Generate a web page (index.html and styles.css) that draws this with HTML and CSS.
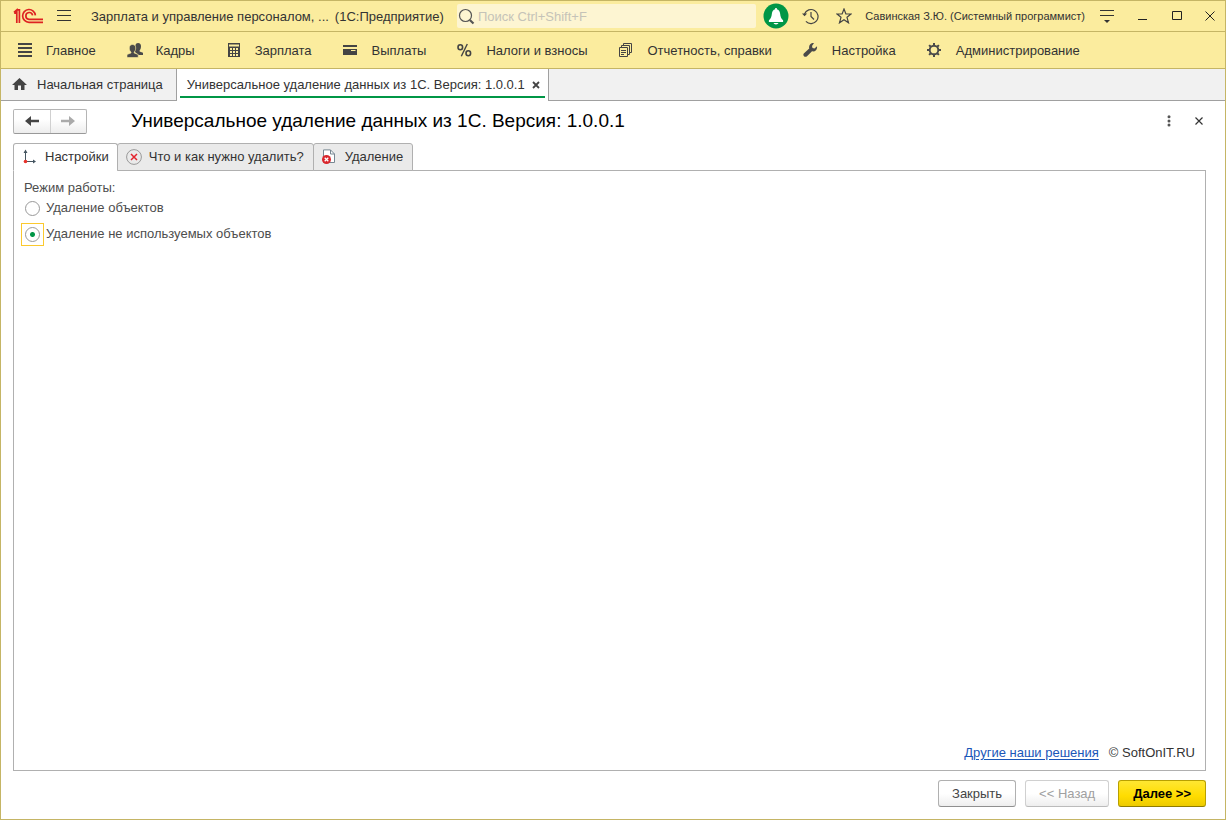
FILE: index.html
```html
<!DOCTYPE html>
<html lang="ru">
<head>
<meta charset="utf-8">
<title>Универсальное удаление данных из 1С</title>
<link rel="stylesheet" href="styles.css">
</head>
<body>
<div class="window">
  <header class="titlebar">
    <svg class="logo" width="30" height="16" viewBox="0 0 30 16" fill="none" stroke="#dd2222" stroke-width="1.700"><path d="M1 4.500 3.800 2V15M3.500 1.900H6.400V15M1.200 5.200H3.500"/><path d="M22.400 7.300A6.400 6.400 0 1 0 16 14.300H30"/><path d="M19.600 7.300A3.400 3.400 0 1 0 16 11.300H30"/></svg>
    <button class="icon-btn menu-btn" aria-label="Меню"><svg width="14" height="12" viewBox="0 0 14 12" stroke="#333"><path d="M0 .5H14M0 5.500H14M0 10.500H14"/></svg></button>
    <div class="app-title"><span>Зарплата и управление персоналом, ...</span><span>(1С:Предприятие)</span></div>
    <label class="search"><svg width="17" height="17" viewBox="0 0 17 17" fill="none" stroke="#555"><circle cx="7.500" cy="7.500" r="6" stroke-width="1.200"/><path d="M11.800 12 15.500 15.500" stroke-width="2.200"/></svg><input type="text" placeholder="Поиск Ctrl+Shift+F" aria-label="Поиск"></label>
    <button class="icon-btn bell" aria-label="Уведомления"><svg width="26" height="26" viewBox="0 0 26 26"><circle cx="13" cy="13" r="12.500" fill="#009646"/><path d="M12.200 5h1.600v1.300c2 .5 3 2 3.300 4.200.4 3.200 1 5 3 6.700V19H5.900v-1.800c2-1.700 2.600-3.500 3-6.700.3-2.200 1.300-3.700 3.300-4.200zM10.500 20h5c-.5 1.900-4.500 1.900-5 0z" fill="#fff"/></svg></button>
    <button class="icon-btn history" aria-label="История"><svg width="17" height="17" viewBox="0 0 17 17" fill="none" stroke="#444" stroke-width="1.200"><path d="M2.500 6A7 7 0 1 1 3.900 13.300M9 4V8.500L12 11.500"/><path d="M0 5.500H5.200L2.500 8.300z" fill="#444" stroke="none"/></svg></button>
    <button class="icon-btn star" aria-label="Избранное"><svg width="16" height="16" viewBox="0 0 16 16" fill="none" stroke="#444" stroke-width="1.200"><path d="M8 1 9.900 6H15L11 9.300 12.500 14.800 8 11.700 3.500 14.800 5 9.300 1 6H6.100z"/></svg></button>
    <span class="user">Савинская З.Ю. (Системный программист)</span>
    <button class="icon-btn options" aria-label="Параметры"><svg width="14" height="14" viewBox="0 0 14 14"><path d="M0 1.500H14M0 6.500H14" stroke="#333"/><path d="M4 11H10L7 14z" fill="#333"/></svg></button>
    <button class="icon-btn minimize" aria-label="Свернуть"><svg width="10" height="10" viewBox="0 0 10 10" stroke="#222"><path d="M0 8.500H9"/></svg></button>
    <button class="icon-btn maximize" aria-label="Развернуть"><svg width="10" height="10" viewBox="0 0 10 10" fill="none" stroke="#222"><path d="M.5.5H9.500V8.500H.5z"/></svg></button>
    <button class="icon-btn" aria-label="Закрыть окно"><svg width="10" height="10" viewBox="0 0 10 10" stroke="#222"><path d="M.5.5 9.500 9.500M9.500.5.5 9.500"/></svg></button>
  </header>

  <nav class="sections">
    <button class="section"><svg width="16" height="16" viewBox="0 0 16 16" stroke="#444" stroke-width="2"><path d="M1 1H15M1 5H15M1 9H15M1 13H15"/></svg>Главное</button>
    <button class="section"><svg width="16" height="16" viewBox="0 0 16 16" fill="#4a4a4a"><path d="M11 0c2.200 0 3 1.400 3 3.300S13.200 7 12.600 7.500v1L16 9.800V12h-4.500L8 9 8.500 2C8.800.7 9.700 0 11 0z"/><path d="M5.500 1.500c2.200 0 3.200 1.500 3.200 3.500S7.800 8.500 7.200 9v1l4 1.500v3H0v-3L4 10V9C3 8.400 2.300 6.800 2.300 5S3.300 1.500 5.500 1.500z" stroke="#fbec9e" stroke-width=".6"/></svg>Кадры</button>
    <button class="section"><svg width="16" height="16" viewBox="0 0 16 16"><path d="M2 0H14V14H2z" fill="#444"/><path d="M3 1.500H13V3.500H3zM4 5H6V7H4zM7 5H9V7H7zM10 5H12V7H10zM4 8H6V10H4zM7 8H9V10H7zM10 8H12V10H10zM4 11H6V13H4zM7 11H9V13H7zM10 11H12V13H10z" fill="#fbec9e"/></svg>Зарплата</button>
    <button class="section"><svg width="16" height="16" viewBox="0 0 16 16" fill="#444"><path d="M0 2H14V4H0zM0 6H14V12H0z"/><path d="M8 7.500H12.500" stroke="#fbec9e"/></svg>Выплаты</button>
    <button class="section"><svg width="16" height="16" viewBox="0 0 16 16" fill="none" stroke="#444" stroke-width="1.600"><ellipse cx="3.300" cy="4.200" rx="2.300" ry="2.500"/><ellipse cx="11.300" cy="10.200" rx="2.300" ry="2.500"/><path d="M10.300 1 4.300 13.300" stroke-width="1.400"/></svg>Налоги и взносы</button>
    <button class="section"><svg width="16" height="16" viewBox="0 0 16 16" fill="none" stroke="#444"><path d="M.5 4.500H8.500V13.500H.5zM2.500 4.500V2.500H10.500V11.500H8.500M4.500 2.500V.5H12.500V9.500H10.500M2 7.500H7M2 9.500H7M2 11.500H5"/></svg>Отчетность, справки</button>
    <button class="section"><svg width="16" height="16" viewBox="0 0 16 16" fill="#4a4a4a"><path d="M11 0 9 3 9.500 5 11.500 5.500 14 3.300C14.500 6.500 12.300 9 9 8.300L4 13.300C2 15-.8 12.500.8 10.500L6.200 5.400C5.400 2 8 -.5 11 0z"/></svg>Настройка</button>
    <button class="section"><svg width="16" height="16" viewBox="0 0 16 16" fill="none" stroke="#4a4a4a"><g transform="translate(-1 -1)"><circle cx="8" cy="8" r="4.300" stroke-width="1.900"/><path d="M8 1V3.500M8 12.500V15M1 8H3.500M12.500 8H15M3.100 3.100 4.800 4.800M11.200 11.200 12.900 12.900M3.100 12.900 4.800 11.200M11.200 4.800 12.900 3.100" stroke-width="2"/></g></svg>Администрирование</button>
  </nav>

  <div class="page-tabs">
    <button class="page-tab home"><svg width="16" height="14" viewBox="0 0 16 14" fill="#444"><path d="M7.500 0 15 7H12.500V12H9V7.500H6V12H2.500V7H0z"/></svg>Начальная страница</button>
    <div class="page-tab current"><span>Универсальное удаление данных из 1С. Версия: 1.0.0.1</span><button class="icon-btn" aria-label="Закрыть вкладку"><svg width="8" height="8" viewBox="0 0 8 8" stroke="#444" stroke-width="1.800"><path d="M1 1 7 7M7 1 1 7"/></svg></button></div>
  </div>

  <main class="content">
    <div class="form-head">
      <div class="history-nav">
        <button aria-label="Назад"><svg width="14" height="12" viewBox="0 0 14 12" fill="#444"><path d="M0 6 6 1V4.800H14V7.200H6V11z"/></svg></button>
        <button aria-label="Вперед" disabled><svg width="14" height="12" viewBox="0 0 14 12" fill="#aaa"><path d="M14 6 8 1V4.800H0V7.200H8V11z"/></svg></button>
      </div>
      <h1>Универсальное удаление данных из 1С. Версия: 1.0.0.1</h1>
      <button class="icon-btn more" aria-label="Ещё"><svg width="4" height="12" viewBox="0 0 4 12" fill="#555"><circle cx="2" cy="1.700" r="1.500"/><circle cx="2" cy="5.900" r="1.500"/><circle cx="2" cy="10.100" r="1.500"/></svg></button>
      <button class="icon-btn" aria-label="Закрыть форму"><svg width="8" height="8" viewBox="0 0 8 8" stroke="#333" stroke-width="1.200"><path d="M.5.5 7.500 7.500M7.500.5.5 7.500"/></svg></button>
    </div>

    <div class="form-tabs" role="tablist">
      <button class="form-tab active" role="tab" aria-selected="true"><svg width="16" height="16" viewBox="0 0 16 16"><path d="M3.500 12V4M4 12.500H12" stroke="#445560"/><path d="M1.500 4 3.500 .5 5.500 4zM11 10.500V14.500L14 12.500z" fill="#445560"/><circle cx="3.500" cy="12.500" r="1.800" fill="#e8322a"/></svg>Настройки</button>
      <button class="form-tab" role="tab" aria-selected="false"><svg width="16" height="16" viewBox="0 0 16 16" fill="none"><circle cx="8" cy="8" r="7.400" stroke="#999"/><path d="M5 5 11 11M11 5 5 11" stroke="#e3232d" stroke-width="1.500"/></svg>Что и как нужно удалить?</button>
      <button class="form-tab" role="tab" aria-selected="false"><svg width="16" height="16" viewBox="0 0 16 16"><path d="M1.500.9H8.500L12.500 5V13.500H1.500z" fill="#fff" stroke="#778792"/><path d="M8.500 1V5H12.500" fill="none" stroke="#778792"/><circle cx="4.500" cy="10.500" r="4.500" fill="#d9262c"/><path d="M2.700 8.700 6.300 12.300M6.300 8.700 2.700 12.300" stroke="#fff" stroke-width="1.300"/></svg>Удаление</button>
    </div>

    <section class="panel">
      <fieldset class="mode">
        <legend>Режим работы:</legend>
        <label class="option"><span class="mark"><input type="radio" name="mode"></span>Удаление объектов</label>
        <label class="option"><span class="mark focused"><input type="radio" name="mode" checked></span>Удаление не используемых объектов</label>
      </fieldset>
      <div class="about"><a href="#">Другие наши решения</a><span>© SoftOnIT.RU</span></div>
    </section>

    <footer class="actions">
      <button class="btn">Закрыть</button>
      <button class="btn back" disabled>&lt;&lt; Назад</button>
      <button class="btn primary">Далее &gt;&gt;</button>
    </footer>
  </main>
</div>
</body>
</html>
```
FILE: styles.css
```css
* { box-sizing: border-box; }
body { margin: 0; font: 13px/16px "Liberation Sans", Arial, sans-serif; color: #333; background: #fff; }
button { font: inherit; color: inherit; margin: 0; padding: 0; border: 0; background: none; white-space: nowrap; }
svg { display: block; flex: none; }

.window { display: flex; flex-direction: column; min-height: 100vh; border: 1px solid #c5b565; }
.icon-btn { display: flex; flex: none; align-items: center; justify-content: center; }

.titlebar { display: flex; align-items: center; height: 31px; padding: 0 10px 0 12px; background: #fbec9e; border-bottom: 1px solid #c5b565; white-space: nowrap; }
.menu-btn { margin-left: 14px; }
.app-title { display: flex; gap: 6px; margin-left: 20px; padding-top: 1px; }
.search { display: flex; flex: 1; align-items: center; gap: 3px; height: 24px; margin-left: 13px; padding-left: 1px; background: #fdf5d2; border-radius: 2px; }
.search input { flex: 1; min-width: 0; padding: 1px 0 0; border: 0; outline: 0; background: none; font: inherit; }
.search input::placeholder { color: #c5c3b8; opacity: 1; }
.bell { margin-left: 7px; }
.history { margin-left: 13px; }
.star { margin-left: 17px; }
.user { margin-left: 13px; font-size: 11px; }
.options { margin-left: 15px; }
.minimize { margin-left: 24px; }
.maximize { margin-left: 24px; margin-right: 23px; }

.sections { display: flex; gap: 31px; height: 37px; padding: 1px 0 0 16px; background: #fbec9e; border-bottom: 1px solid #c5b565; }
.section { display: flex; align-items: center; gap: 13px; }

.page-tabs { display: flex; height: 32px; background: #f1f1f1; border-bottom: 1px solid #a0a0a0; }
.page-tab { display: flex; align-items: center; border-right: 1px solid #a0a0a0; }
.home { gap: 9px; padding: 0 13px 0 11px; }
.current { position: relative; gap: 7px; padding: 0 8px 1px 10px; margin-bottom: -1px; background: #fff; }
.current::after { content: ""; position: absolute; left: 3px; right: 3px; bottom: 3px; height: 2px; background: #009646; }

.content { display: flex; flex: 1; flex-direction: column; padding: 8px 19px 12px 12px; }
.form-head { display: flex; align-items: center; height: 24px; }
.history-nav { display: flex; width: 74px; height: 25px; border: 1px solid #b5b5b5; border-bottom-color: #999; border-radius: 2px; background: linear-gradient(#fff 40%, #ededed); }
.history-nav button { display: flex; flex: 1; align-items: center; justify-content: center; }
.history-nav button + button { border-left: 1px solid #d0d0d0; }
h1 { flex: 1; margin: 0 0 0 44px; font-size: 19px; line-height: 24px; font-weight: 400; color: #000; }
.more { margin-right: 24px; }
.form-head > .icon-btn:last-child { margin-right: 3px; }

.form-tabs { display: flex; z-index: 1; margin-top: 10px; }
.form-tab { display: flex; align-items: center; gap: 7px; height: 28px; margin-left: -1px; padding: 0 9px 0 8px; background: #eaeaea; border: 1px solid #b0b0b0; border-radius: 3px 3px 0 0; }
.form-tab.active { margin-left: 0; padding-right: 8px; background: #fff; border-bottom-color: #fff; }

.panel { display: flex; flex: 1; flex-direction: column; justify-content: space-between; margin-top: -1px; padding: 9px 10px; border: 1px solid #b0b0b0; }
.mode { margin: 0; padding: 0; border: 0; color: #4d4d4d; }
.mode legend { padding: 0; }
.option { display: flex; align-items: center; gap: 2px; height: 24px; margin-left: -3px; }
.option + .option { margin-top: 2px; }
.mark { display: flex; align-items: center; justify-content: center; width: 23px; height: 23px; border: 1px solid transparent; }
.mark.focused { border: 1px solid #fbc92e; }
.mark input { appearance: none; width: 15px; height: 15px; margin: 0; border: 1px solid #999; border-radius: 50%; background: #fff; outline: 0; }
.mark input:checked { background: radial-gradient(circle, #009646 2px, #fff 3px); }
.about { display: flex; justify-content: flex-end; gap: 10px; }
.about a { color: #1a56b8; text-underline-offset: 2px; }

.actions { display: flex; justify-content: flex-end; gap: 9px; margin-top: 9px; }
.btn { height: 27px; padding: 0 13px; color: #444; background: linear-gradient(#fff 50%, #eee); border: 1px solid #b0b0b0; border-bottom-color: #8f8f8f; border-radius: 3px; }
.back { color: #a0a0a0; border-color: #d0d0d0; border-bottom-color: #bbb; }
.primary { padding: 0 14px; color: #000; font-weight: 700; background: linear-gradient(#ffe732, #ffdc00 60%, #edcb00); border-color: #b8a000; border-bottom-color: #8f7c00; }
```
